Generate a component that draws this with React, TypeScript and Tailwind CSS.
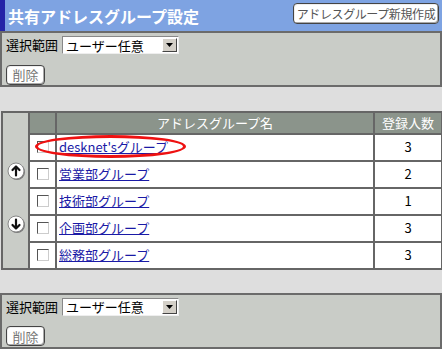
import React from 'react';

const jp = '"Noto Sans CJK JP", "Liberation Sans", sans-serif';

const groups = [
  { name: "desknet'sグループ", count: 3 },
  { name: '営業部グループ', count: 2 },
  { name: '技術部グループ', count: 1 },
  { name: '企画部グループ', count: 3 },
  { name: '総務部グループ', count: 3 },
];

const CircleArrow = ({ down = false }: { down?: boolean }) => (
  <svg width="19" height="19" viewBox="0 0 19 19">
    <circle cx="10" cy="10" r="8" fill="#777" />
    <circle cx="9" cy="9" r="8" fill="#fff" stroke="#888" strokeWidth="1" />
    <g transform={down ? 'rotate(180 9 9)' : undefined} stroke="#111" strokeWidth="2.2" fill="none" strokeLinecap="round" strokeLinejoin="round">
      <path d="M9 13.5V4.5M5.5 8L9 4.5 12.5 8" />
    </g>
  </svg>
);

const Button = ({ children, className = '' }: { children: React.ReactNode; className?: string }) => (
  <button className={`h-[20px] rounded-[4px] border border-[#444] bg-white leading-none whitespace-nowrap shadow-[inset_-1px_-1px_0_#aaa,inset_1px_1px_0_#eee] ${className}`}>
    {children}
  </button>
);

const RangePanel = () => (
  <div className="h-[56px] border-2 border-[#6b6b6b] bg-[#c9ccc7] pl-[4px] pt-[3px]">
    <div className="flex items-center h-[18px]">
      <span className="text-[13px] text-black w-[56px]">選択範囲</span>
      <div className="flex items-center h-[18px] w-[117px] bg-white border border-[#888] border-r-[#eee] border-b-[#eee] pl-[3px] pr-[1px]">
        <span className="flex-1 text-[13px] leading-none text-black">ユーザー任意</span>
        <span className="flex items-center justify-center w-[15px] h-[14px] bg-[#d4d0c8] border border-[#fff] border-r-[#444] border-b-[#444]">
          <svg width="7" height="4" viewBox="0 0 7 4"><path d="M0 0h7L3.5 4z" fill="#000" /></svg>
        </span>
      </div>
    </div>
    <div className="mt-[7px]">
      <Button className="w-[39px] text-[13px] text-[#777]">削除</Button>
    </div>
  </div>
);

export default function App() {
  return (
    <div className="w-[442px] h-[349px] bg-[#dedede] overflow-hidden" style={{ fontFamily: jp }}>
      <div className="flex h-[31px] items-center justify-between bg-[#7ea3e2] border-l-[5px] border-[#2424a8] pl-[3px] pr-[3px]">
        <h1 className="text-white font-bold text-[16px] leading-none">共有アドレスグループ設定</h1>
        <Button className="h-[21px] w-[146px] px-[2px] text-[12px] tracking-[-0.4px] text-[#555] -mt-[4px]">アドレスグループ新規作成</Button>
      </div>

      <RangePanel />

      <div className="relative mt-[24px] ml-[1px]">
        <table className="table-fixed border-collapse w-[440px] text-[12px]">
          <colgroup>
            <col className="w-[27px]" />
            <col className="w-[27px]" />
            <col className="w-[318px]" />
            <col className="w-[68px]" />
          </colgroup>
          <tbody>
            <tr className="h-[20px]">
              <td rowSpan={6} className="border-2 border-[#666] bg-[#c9ccc7] align-top p-0">
                <div className="flex flex-col items-center pt-[49px] gap-[34px] pl-[1px]">
                  <CircleArrow />
                  <CircleArrow down />
                </div>
              </td>
              <td className="border-2 border-[#666] bg-[#8b948b]"></td>
              <td className="border-2 border-[#666] bg-[#8b948b] text-center text-white text-[13px]">アドレスグループ名</td>
              <td className="border-2 border-[#666] bg-[#8b948b] text-center text-white text-[13px]">登録人数</td>
            </tr>
            {groups.map((g) => (
              <tr key={g.name} className="h-[27px] bg-white">
                <td className="border-2 border-[#666] p-0">
                  <div className="flex justify-center">
                    <span className="block w-[12px] h-[12px] border border-[#555] border-r-[#ccc] border-b-[#ccc] bg-white" />
                  </div>
                </td>
                <td className="border-2 border-[#666] pl-[2px]">
                  <a href="#" className="text-[#1a1aa6] underline text-[13px]">{g.name}</a>
                </td>
                <td className="border-2 border-[#666] text-center text-black text-[13px]">{g.count}</td>
              </tr>
            ))}
          </tbody>
        </table>
        <div className="absolute left-[34px] top-[24px] w-[151px] h-[23px] rounded-[50%] border-[3px] border-[#ee1111]" />
      </div>

      <div className="mt-[23px]">
        <RangePanel />
      </div>
    </div>
  );
}
